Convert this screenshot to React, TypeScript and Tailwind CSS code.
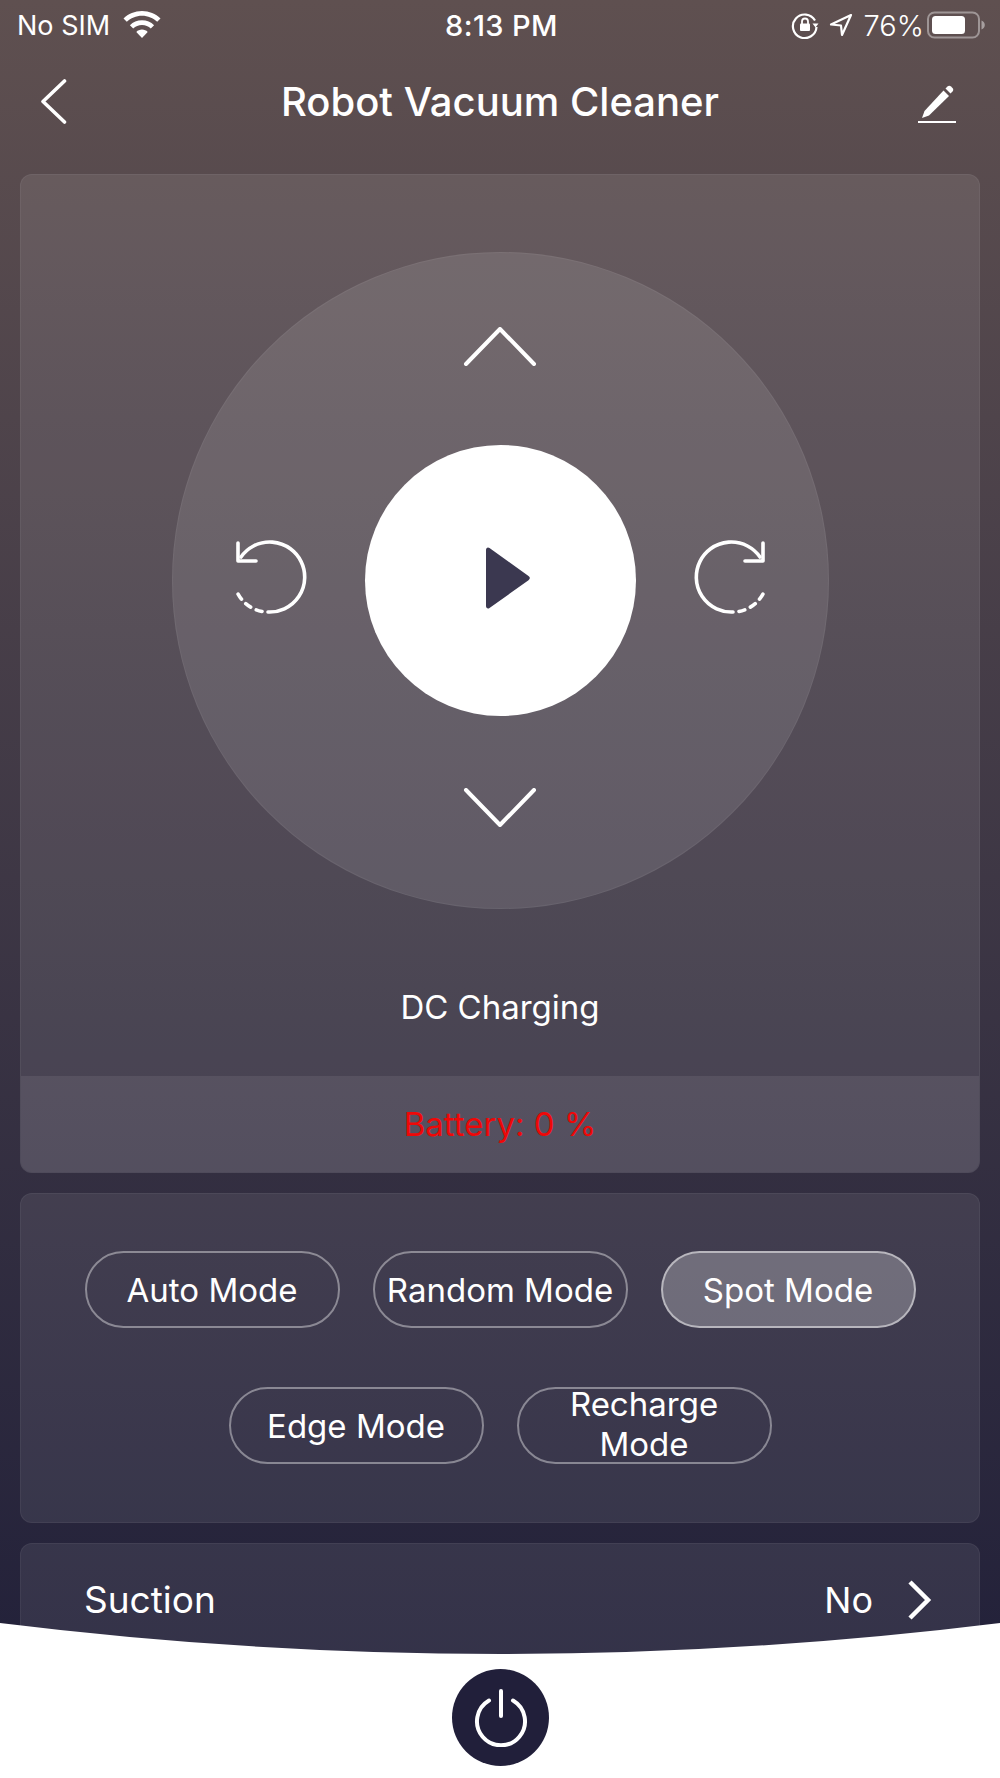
import React from 'react';

const modesTop = [
  { label: 'Auto Mode', active: false },
  { label: 'Random Mode', active: false },
  { label: 'Spot Mode', active: true },
];

const modesBottom = [
  { label: 'Edge Mode', active: false },
  { label: 'Recharge Mode', active: false },
];

const ModeButton: React.FC<{ label: string; active: boolean }> = ({ label, active }) => (
  <button
    type="button"
    className={`w-[255px] h-[77px] rounded-[39px] border-2 text-[33px] leading-[40px] text-white text-center px-3 ${
      active ? 'bg-white/25 border-white/50' : 'border-white/40'
    }`}
  >
    {/* two line label is taller than the pill */}
    <span className={`block ${label === 'Recharge Mode' ? '-mt-[5px]' : ''}`}>{label}</span>
  </button>
);

const RotateIcon: React.FC<{ flip?: boolean }> = ({ flip }) => (
  <svg
    width="80"
    height="80"
    viewBox="0 0 80 80"
    fill="none"
    stroke="white"
    strokeWidth="3.6"
    strokeLinecap="round"
    strokeLinejoin="round"
    className={`mb-[7px] ${flip ? '-scale-x-100' : ''}`}
  >
    <path d="M13 20A35 35 0 1 1 40 75" />
    <path d="M10 6V24H28" />
    <path d="M34 74.5A35 35 0 0 1 9 55" strokeDasharray="6 6.2" />
  </svg>
);

const App: React.FC = () => {
  return (
    <div className="relative w-[1000px] h-[1778px] overflow-hidden bg-gradient-to-b from-[#5f5050] to-[#1f1e38] font-['Inter',sans-serif] text-white">
      {/* status bar */}
      <div className="h-[50px] flex items-center justify-between pl-[17px] pr-[14px] text-[27px] leading-none">
        <div className="w-[300px] flex items-center gap-[13px]">
          <span>No SIM</span>
          <svg width="38" height="27" viewBox="0 0 38 27" fill="white" className="-mt-[1px]">
            <path d="M19 0C11.800 0 5.300 2.800.5 7.400l3.300 3.400C7.700 7 13.100 4.700 19 4.700s11.300 2.300 15.200 6.100l3.300-3.400C32.700 2.800 26.200 0 19 0z" />
            <path d="M19 9.300c-4.700 0-9 1.900-12.100 4.900l3.300 3.400c2.300-2.200 5.400-3.600 8.800-3.600s6.500 1.400 8.800 3.600l3.300-3.400C28 11.200 23.700 9.300 19 9.300z" />
            <path d="M19 18.600c-2.200 0-4.200.9-5.700 2.300L19 27l5.700-6.100c-1.500-1.400-3.500-2.300-5.700-2.300z" />
          </svg>
        </div>
        <span className="font-medium text-[29px] tracking-[0.4px]">8:13 PM</span>
        <div className="w-[300px] flex items-center justify-end">
          <svg width="28" height="28" viewBox="0 0 28 28" fill="none" stroke="white" strokeWidth="2.2" className="mr-[10px]">
            <path d="M24 9.500A11.800 11.800 0 1 0 25.500 16" />
            <path d="M21.500 12.500h6l-3 4z" fill="white" stroke="none" />
            <rect x="9" y="12.500" width="10" height="7.500" rx="1" fill="white" stroke="none" />
            <path d="M11 13V10.500a3 3 0 0 1 6 0V13" strokeWidth="1.800" />
          </svg>
          <svg width="24" height="24" viewBox="0 0 24 24" fill="none" stroke="white" strokeWidth="2.200" strokeLinejoin="round" className="mr-[11px]">
            <path d="M22 2 2 11.500 12 12.500 13 22z" />
          </svg>
          <span className="font-light text-[29px]">76%</span>
          <svg width="59" height="28" viewBox="0 0 59 28" fill="none" className="ml-[3px]">
            <rect x="1" y="1.500" width="51" height="25" rx="6.500" stroke="white" strokeOpacity="0.4" strokeWidth="2" />
            <rect x="5" y="5" width="33" height="18" rx="3.500" fill="white" />
            <path d="M54.500 9.500c2 .8 3.300 2.500 3.300 4.500s-1.300 3.700-3.300 4.500z" fill="white" fillOpacity="0.45" />
          </svg>
        </div>
      </div>

      {/* header */}
      <div className="relative h-[124px] flex items-center justify-between pl-[41px] pr-[42px]">
        <div className="w-[41px] -mt-[21px]">
          <svg width="26" height="45" viewBox="0 0 26 45" fill="none" stroke="white" strokeWidth="3.600" strokeLinecap="round" strokeLinejoin="round">
            <path d="M23.500 2 2 22.500 23.500 43" />
          </svg>
        </div>
        <h1 className="text-[40px] leading-[46px] font-medium -mt-[21px]">Robot Vacuum Cleaner</h1>
        <svg width="40" height="40" viewBox="0 0 40 40" fill="white" className="-mt-[16px]">
          <path d="M25.500 6.500 31 12 11 31.500 4 34 6.500 27z" />
          <path d="M27.500 4.500 29.500 2.500c1-1 2.500-1 3.500 0l1.500 1.500c1 1 1 2.500 0 3.500l-2 2z" />
          <rect x="0" y="37" width="38" height="2" />
        </svg>
      </div>

      <div className="px-5">
        {/* control card */}
        <div className="h-[999px] flex flex-col rounded-[12px] border border-white/5 bg-white/[0.09] overflow-hidden">
          <div className="flex-1 flex flex-col items-center pt-[77px]">
            <div className="w-[657px] h-[657px] rounded-full border border-white/5 bg-white/10 flex flex-col items-center pt-[74px]">
              <svg width="74" height="39" viewBox="0 0 74 39" fill="none" stroke="white" strokeWidth="4" strokeLinecap="round" strokeLinejoin="round">
                <path d="M3 37 37 2l34 35" />
              </svg>
              <div className="mt-[79px] h-[271px] flex items-center justify-center gap-[57px]">
                <RotateIcon />
                <div className="w-[271px] h-[271px] rounded-full bg-white flex items-center justify-center">
                  <svg width="44" height="62" viewBox="0 0 44 62" fill="#3b3850" className="ml-[16px] -mt-[6px]">
                    <path d="M0 3C0 .8 1.800 -.2 3.500 1L42.500 29c1.800 1.200 1.800 3 0 4.200L3.500 61C1.800 62.200 0 61.200 0 59z" />
                  </svg>
                </div>
                <RotateIcon flip />
              </div>
              <svg width="74" height="39" viewBox="0 0 74 39" fill="none" stroke="white" strokeWidth="4" strokeLinecap="round" strokeLinejoin="round" className="mt-[72px]">
                <path d="M3 2l34 35L71 2" />
              </svg>
            </div>
            <div className="mt-[76px] text-[33px] leading-[44px]">DC Charging</div>
          </div>
          <div className="h-[96px] flex items-center justify-center bg-white/[0.08] text-[33px] text-[#ee0808]">
            <span className="mt-[2px]">Battery: 0 %</span>
          </div>
        </div>

        {/* mode card */}
        <div className="mt-[20px] h-[330px] rounded-[12px] border border-white/5 bg-white/[0.08] flex flex-col items-center pt-[57px] gap-[59px]">
          <div className="flex gap-[33px]">
            {modesTop.map(mode => (
              <ModeButton key={mode.label} label={mode.label} active={mode.active} />
            ))}
          </div>
          <div className="flex gap-[33px]">
            {modesBottom.map(mode => (
              <ModeButton key={mode.label} label={mode.label} active={mode.active} />
            ))}
          </div>
        </div>

        {/* suction row */}
        <div className="mt-[20px] h-[200px] rounded-[12px] border border-white/5 bg-white/[0.08] flex items-start justify-between pl-[63px] pr-[47px] pt-[32px] text-[37px] leading-[48px]">
          <span>Suction</span>
          <div className="flex items-center gap-[33px]">
            <span className="text-[36px]">No</span>
            <svg width="26" height="40" viewBox="0 0 26 40" fill="none" stroke="white" strokeWidth="4.500" strokeLinejoin="miter">
              <path d="M4 2l18 18L4 38" />
            </svg>
          </div>
        </div>
      </div>

      {/* bottom bar */}
      <div className="absolute bottom-0 left-0 w-[1000px] h-[155px]">
        <svg width="1000" height="155" viewBox="0 0 1000 155" className="absolute inset-0">
          <path d="M0 0Q500 62 1000 0V155H0z" fill="white" />
        </svg>
        <div className="absolute left-[452px] top-[46px] w-[97px] h-[97px] rounded-full bg-[#211f3a] flex items-center justify-center">
          <svg width="54" height="58" viewBox="0 0 54 58" fill="none" stroke="white" strokeWidth="4" strokeLinecap="round">
            <path d="M15 11.500A24 24 0 1 0 39 11.500" />
            <path d="M27 2v25" />
          </svg>
        </div>
      </div>
    </div>
  );
};

export default App;
